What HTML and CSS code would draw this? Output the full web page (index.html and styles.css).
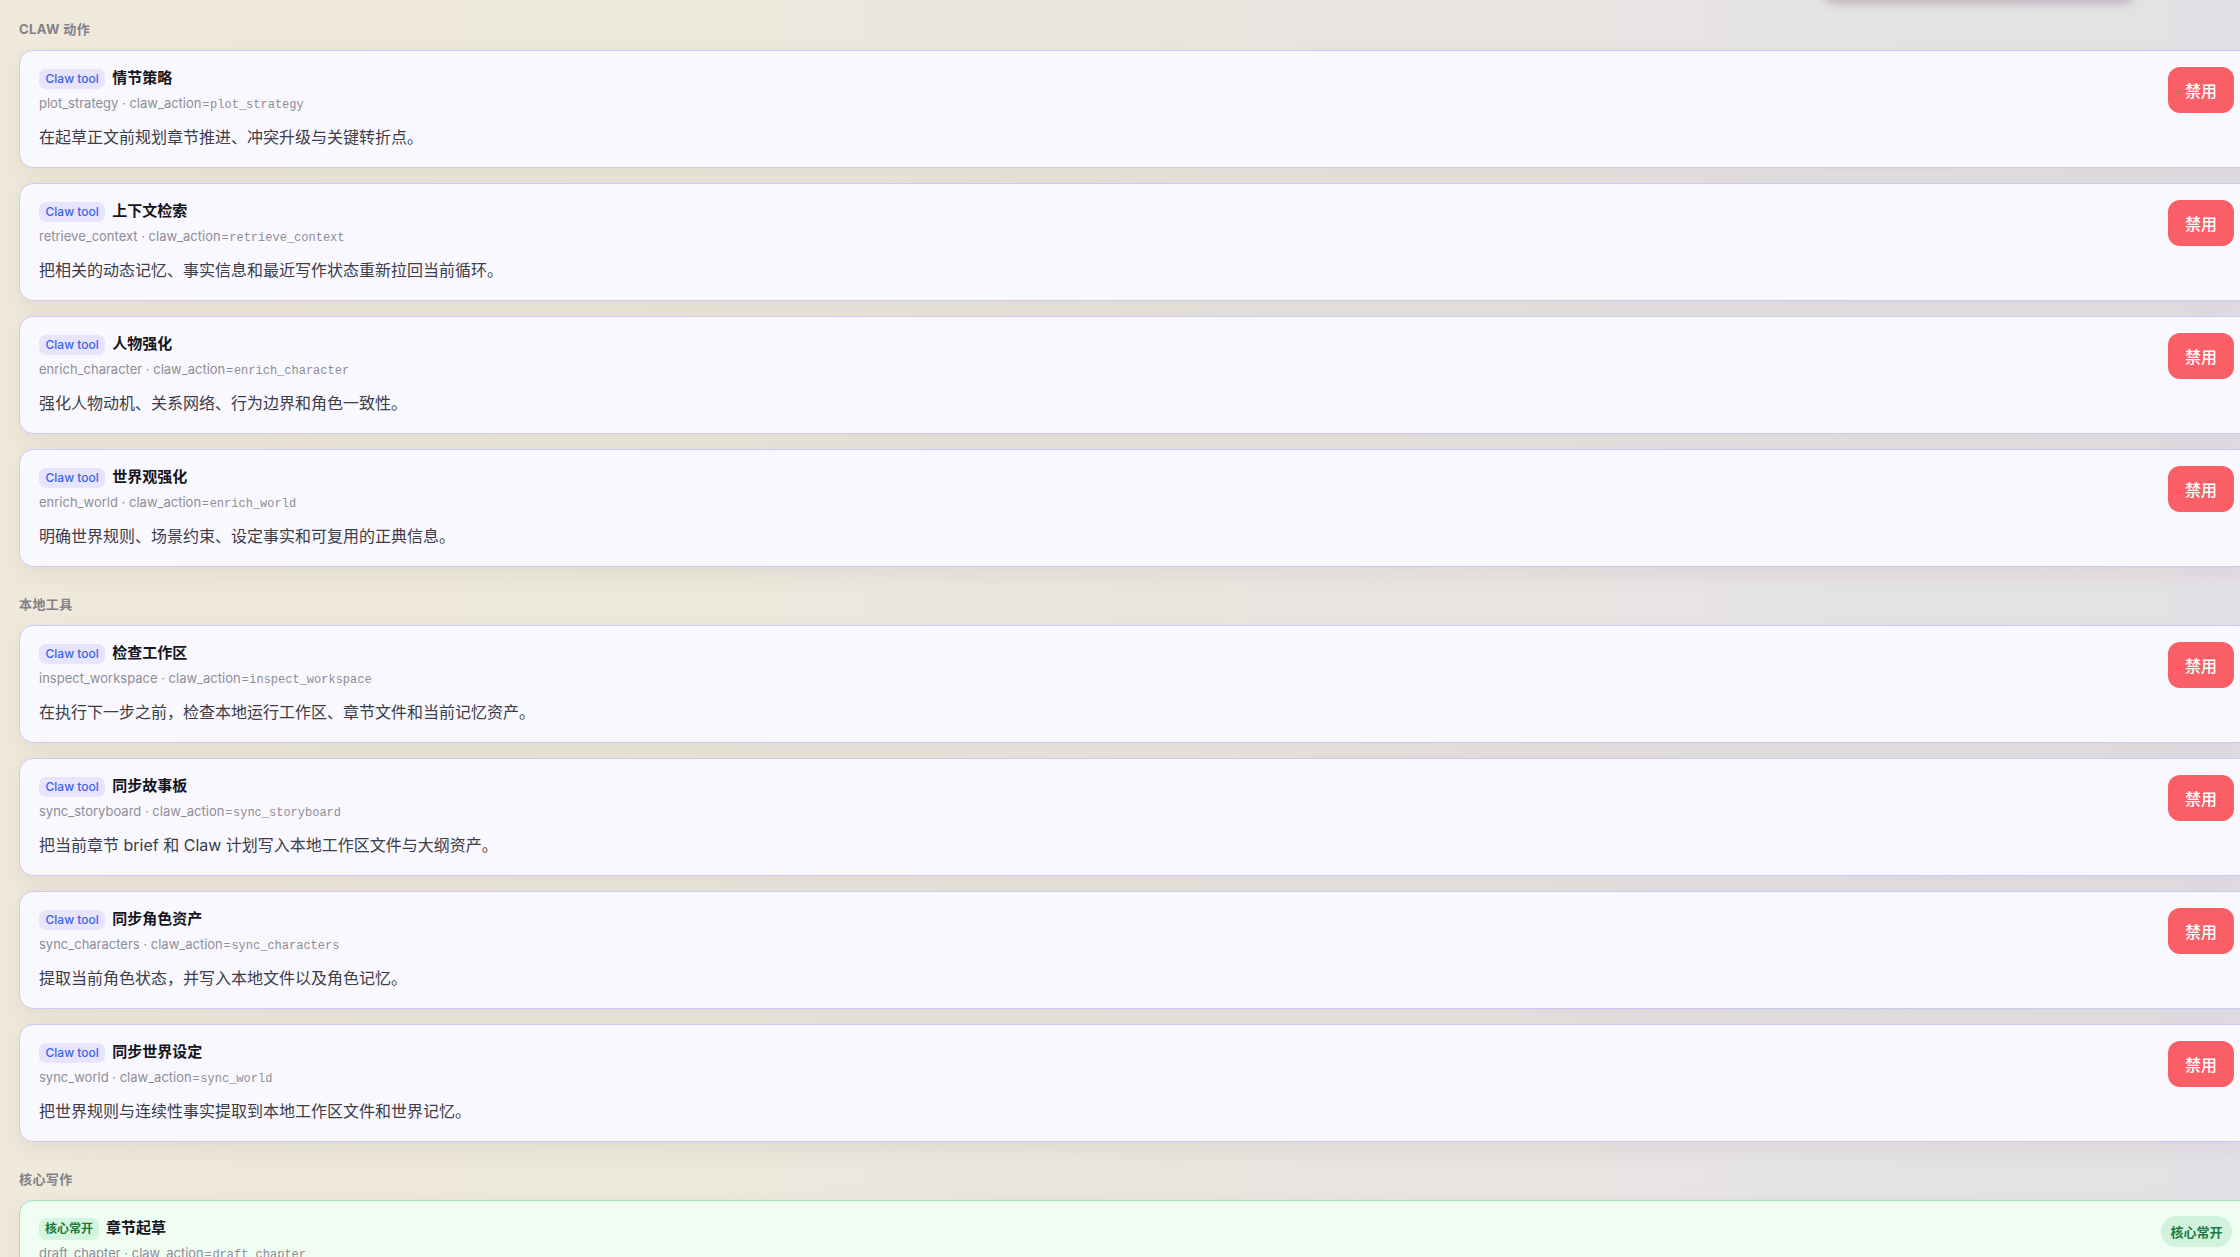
FILE: index.html
```html
<!DOCTYPE html>
<html lang="zh-CN">
<head>
<meta charset="utf-8">
<title>Claw 工具</title>
<link rel="stylesheet" href="styles.css">
</head>
<body>
<div class="page">
  <div class="topbar-shadow"></div>
  <div class="list">
    <div class="section-label">Claw 动作</div>
    <div class="tool-card">
      <div class="tool-main">
        <div class="tool-head"><span class="badge badge-claw">Claw tool</span><span class="tool-title">情节策略</span></div>
        <div class="tool-meta">plot_strategy · claw_action=<code>plot_strategy</code></div>
        <div class="tool-desc">在起草正文前规划章节推进、冲突升级与关键转折点。</div>
      </div>
      <button class="btn-disable">禁用</button>
    </div>
    <div class="tool-card">
      <div class="tool-main">
        <div class="tool-head"><span class="badge badge-claw">Claw tool</span><span class="tool-title">上下文检索</span></div>
        <div class="tool-meta">retrieve_context · claw_action=<code>retrieve_context</code></div>
        <div class="tool-desc">把相关的动态记忆、事实信息和最近写作状态重新拉回当前循环。</div>
      </div>
      <button class="btn-disable">禁用</button>
    </div>
    <div class="tool-card">
      <div class="tool-main">
        <div class="tool-head"><span class="badge badge-claw">Claw tool</span><span class="tool-title">人物强化</span></div>
        <div class="tool-meta">enrich_character · claw_action=<code>enrich_character</code></div>
        <div class="tool-desc">强化人物动机、关系网络、行为边界和角色一致性。</div>
      </div>
      <button class="btn-disable">禁用</button>
    </div>
    <div class="tool-card">
      <div class="tool-main">
        <div class="tool-head"><span class="badge badge-claw">Claw tool</span><span class="tool-title">世界观强化</span></div>
        <div class="tool-meta">enrich_world · claw_action=<code>enrich_world</code></div>
        <div class="tool-desc">明确世界规则、场景约束、设定事实和可复用的正典信息。</div>
      </div>
      <button class="btn-disable">禁用</button>
    </div>

    <div class="section-label">本地工具</div>
    <div class="tool-card">
      <div class="tool-main">
        <div class="tool-head"><span class="badge badge-claw">Claw tool</span><span class="tool-title">检查工作区</span></div>
        <div class="tool-meta">inspect_workspace · claw_action=<code>inspect_workspace</code></div>
        <div class="tool-desc">在执行下一步之前，检查本地运行工作区、章节文件和当前记忆资产。</div>
      </div>
      <button class="btn-disable">禁用</button>
    </div>
    <div class="tool-card">
      <div class="tool-main">
        <div class="tool-head"><span class="badge badge-claw">Claw tool</span><span class="tool-title">同步故事板</span></div>
        <div class="tool-meta">sync_storyboard · claw_action=<code>sync_storyboard</code></div>
        <div class="tool-desc">把当前章节 brief 和 Claw 计划写入本地工作区文件与大纲资产。</div>
      </div>
      <button class="btn-disable">禁用</button>
    </div>
    <div class="tool-card">
      <div class="tool-main">
        <div class="tool-head"><span class="badge badge-claw">Claw tool</span><span class="tool-title">同步角色资产</span></div>
        <div class="tool-meta">sync_characters · claw_action=<code>sync_characters</code></div>
        <div class="tool-desc">提取当前角色状态，并写入本地文件以及角色记忆。</div>
      </div>
      <button class="btn-disable">禁用</button>
    </div>
    <div class="tool-card">
      <div class="tool-main">
        <div class="tool-head"><span class="badge badge-claw">Claw tool</span><span class="tool-title">同步世界设定</span></div>
        <div class="tool-meta">sync_world · claw_action=<code>sync_world</code></div>
        <div class="tool-desc">把世界规则与连续性事实提取到本地工作区文件和世界记忆。</div>
      </div>
      <button class="btn-disable">禁用</button>
    </div>

    <div class="section-label">核心写作</div>
    <div class="tool-card tool-card-core">
      <div class="tool-main">
        <div class="tool-head"><span class="badge badge-core">核心常开</span><span class="tool-title">章节起草</span></div>
        <div class="tool-meta">draft_chapter · claw_action=<code>draft_chapter</code></div>
        <div class="tool-desc">根据章节计划与上下文生成正文草稿。</div>
      </div>
      <span class="pill-core">核心常开</span>
    </div>
  </div>
</div>
</body>
</html>
```

FILE: styles.css
```css
html {
  overflow: hidden;
}

body {
  margin: 0;
  font-family: Inter, "Noto Sans CJK SC", sans-serif;
  color: #17171f;
  background: linear-gradient(90deg, #efe9db 0%, #ece7dc 40%, #e8e5e2 65%, #e4e1e6 100%);
  min-height: 1257px;
}

.page {
  position: relative;
  width: 2240px;
  min-height: 1257px;
}

.topbar-shadow {
  position: absolute;
  top: -40px;
  left: 1822px;
  width: 312px;
  height: 40px;
  border-radius: 12px;
  box-shadow: 0 3px 10px rgba(60, 55, 70, 0.28);
}

.list {
  display: flex;
  flex-direction: column;
  gap: 15px;
  width: 2234px;
  margin-left: 19px;
  padding-top: 21px;
}

.section-label {
  font-size: 13px;
  line-height: 16px;
  font-weight: 700;
  color: #838089;
  text-transform: uppercase;
  letter-spacing: 0.03em;
  margin-bottom: -2px;
}

.tool-card + .section-label {
  margin-top: 14px;
}

.tool-card {
  display: flex;
  align-items: flex-start;
  box-sizing: border-box;
  height: 118px;
  padding: 17px 18px 18px 19px;
  background: #f9f8ff;
  border: 1px solid #cdc8f7;
  border-radius: 14px;
  box-shadow: 0 8px 22px rgba(70, 60, 50, 0.07);
}

.tool-card-core {
  background: #effdf3;
  border-color: #9fe3b3;
}

.tool-main {
  flex: 1;
  min-width: 0;
}

.tool-head {
  display: flex;
  align-items: center;
  gap: 7px;
  height: 22px;
  line-height: 20px;
}

.badge {
  display: inline-flex;
  align-items: center;
  height: 20px;
  padding: 0 6.5px;
  border-radius: 7px;
  font-size: 12px;
  font-weight: 500;
}

.badge-claw {
  background: #e6e5fd;
  color: #3f62e6;
}

.badge-core {
  height: 22px;
  padding: 0 6px;
  background: #d4f5de;
  color: #1c7a3c;
  font-weight: 700;
}

.tool-title {
  font-size: 15px;
  font-weight: 700;
  color: #15151d;
  margin-top: -3px;
}

.tool-meta {
  margin-top: 5px;
  font-size: 13px;
  line-height: 16px;
  color: #8e8d97;
}

.tool-meta code {
  font-family: "Liberation Mono", monospace;
  font-size: 12px;
}

.tool-desc {
  margin-top: 12px;
  font-size: 16px;
  line-height: 24px;
  color: #3d3c48;
}

.btn-disable {
  margin-top: -1px;
  width: 66px;
  height: 46px;
  border: none;
  border-radius: 12px;
  background: #fa5f68;
  color: #ffffff;
  font-family: Inter, "Noto Sans CJK SC", sans-serif;
  font-size: 16px;
  font-weight: 500;
  padding: 0;
}

.pill-core {
  margin-top: -2px;
  margin-right: 2px;
  display: inline-flex;
  align-items: center;
  justify-content: center;
  width: 71px;
  height: 31px;
  border-radius: 16px;
  background: #d1f2dc;
  color: #1f7a45;
  font-size: 13px;
  font-weight: 700;
}
```
